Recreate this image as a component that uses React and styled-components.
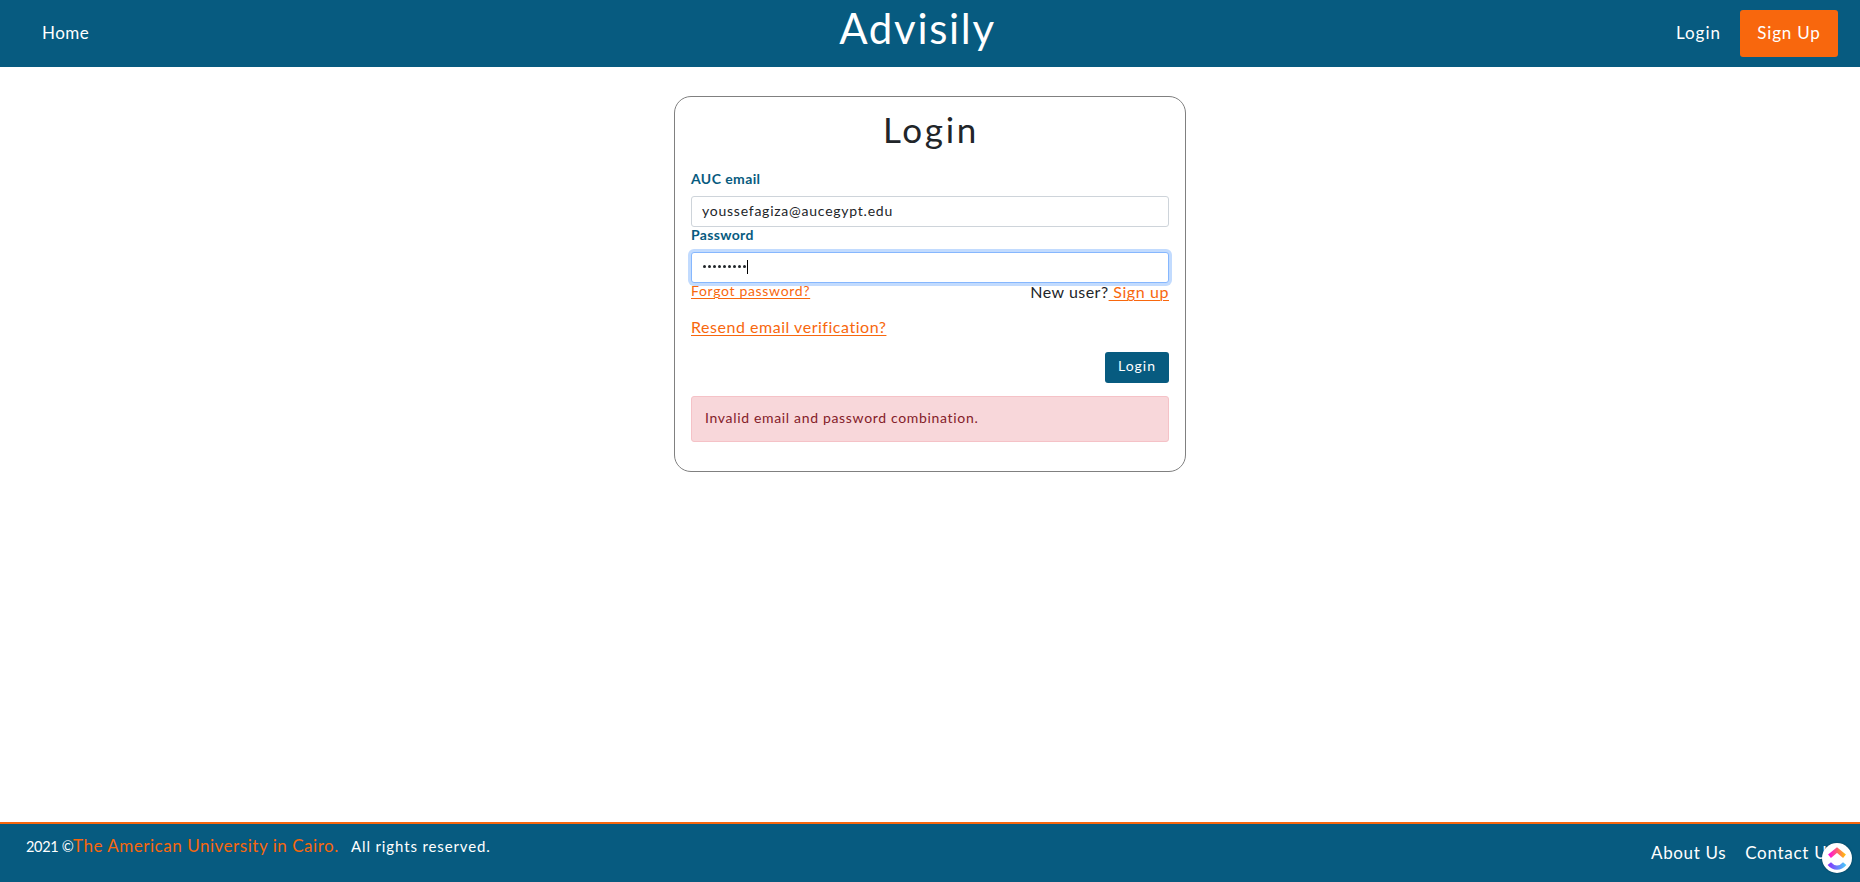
import React from "react";
import styled, { createGlobalStyle, css } from "styled-components";

const BLUE = "#075b80";
const ORANGE = "#f8670d";

const GlobalStyle = createGlobalStyle`
  *, *::before, *::after { box-sizing: border-box; }
  body {
    margin: 0;
    background: #fff;
    color: #212529;
    font-family: Lato, "Liberation Sans", sans-serif;
  }
`;

const type = css`
  font-size: ${(p) => p.$size}px;
  letter-spacing: ${(p) => p.$track || 0}px;
  white-space: nowrap;
`;

const Page = styled.div`
  display: flex;
  flex-direction: column;
  height: 882px;
  overflow: hidden;
`;

const Header = styled.header`
  display: flex;
  justify-content: space-between;
  height: 67px;
  padding: 10px 22px 10px 42px;
  background: ${BLUE};
`;

const NavGroup = styled.nav`
  display: flex;
  align-items: flex-start;
  height: 47px;
  gap: 19px;
  width: 300px;
  justify-content: ${(p) => (p.$end ? "flex-end" : "flex-start")};
`;

const NavLink = styled.a`
  ${type}
  color: #fff;
  line-height: 45px;
`;

const SignUpButton = styled(NavLink)`
  width: 98px;
  height: 47px;
  border-radius: 3px;
  background: ${ORANGE};
  text-align: center;
`;

const Brand = styled.h1`
  ${type}
  margin: -8px 0 0;
  padding-right: 45px;
  color: #fff;
  font-weight: 400;
  line-height: 52px;
`;

const Main = styled.main`
  flex: 1;
  padding-top: 29px;
`;

const Card = styled.form`
  display: flex;
  flex-direction: column;
  width: 512px;
  height: 376px;
  margin: 0 auto;
  padding: 15px 16px;
  border: 1px solid #808080;
  border-radius: 17px;
`;

const CardTitle = styled.h2`
  ${type}
  margin: -3px 0 17px;
  padding-left: 2px;
  font-weight: 400;
  line-height: 40px;
  text-align: center;
`;

const Label = styled.label`
  ${type}
  flex: none;
  height: ${(p) => p.$height}px;
  padding-top: ${(p) => p.$drop || 0}px;
  color: ${BLUE};
  font-weight: 700;
  line-height: ${(p) => p.$line || 17}px;
`;

const Field = styled.div`
  ${type}
  display: flex;
  flex: none;
  align-items: center;
  height: 31px;
  padding: 0 10px 3px;
  border: 1px solid ${(p) => (p.$focused ? "#86b7fe" : "#ced4da")};
  border-radius: 3px;
  background: #fff;
  box-shadow: ${(p) => (p.$focused ? "0 0 0 3px #c2dbfe" : "none")};
`;

const Dots = styled.div`
  display: flex;
  gap: 1.5px;
  padding: 1px 0 0 0.5px;
`;

const Dot = styled.i`
  width: 3.5px;
  height: 3.5px;
  border-radius: 50%;
  background: #212529;
`;

const Caret = styled.i`
  width: 1px;
  height: 14px;
  margin: 2px 0 0 1px;
  background: #000;
`;

const LinkRow = styled.div`
  display: flex;
  flex: none;
  justify-content: space-between;
  height: 35px;
`;

const Prompt = styled.span`
  ${type}
  line-height: 18px;
`;

const TextLink = styled.a`
  ${type}
  align-self: flex-start;
  color: ${ORANGE};
  line-height: ${(p) => p.$line || 18}px;
  text-decoration: underline;
  text-decoration-thickness: 1px;
  text-underline-offset: 2px;
`;

const SubmitButton = styled.button`
  ${type}
  align-self: flex-end;
  flex: none;
  width: 64px;
  height: 31px;
  margin: 16px 0 13px;
  padding: 0 0 4px;
  border: 0;
  border-radius: 3px;
  background: ${BLUE};
  color: #fff;
  font-family: inherit;
`;

const Alert = styled.div`
  ${type}
  flex: none;
  height: 46px;
  padding: 0 13px;
  border: 1px solid #f5c2c7;
  border-radius: 3px;
  background: #f8d7da;
  color: #842029;
  line-height: 41px;
`;

const Footer = styled.footer`
  display: flex;
  justify-content: space-between;
  height: 60px;
  padding: 12px 25px 0 26px;
  border-top: 2px solid ${ORANGE};
  background: ${BLUE};
  color: #fff;
`;

const Copyright = styled.div`
  display: flex;
  align-items: baseline;
  height: 24px;
`;

const FooterText = styled.span`
  ${type}
  width: ${(p) => p.$width}px;
  color: ${(p) => (p.$accent ? ORANGE : "#fff")};
  line-height: 19px;
`;

const FooterLinks = styled.nav`
  display: flex;
  gap: 19px;
  padding-top: 5px;
`;

const FooterLink = styled.a`
  ${type}
  line-height: 23px;
`;

const Launcher = styled.div`
  position: fixed;
  right: 8px;
  bottom: 9px;
  display: flex;
  width: 30px;
  height: 30px;
  border-radius: 50%;
  background: #fff;
  box-shadow: 0 0 2px rgba(0, 0, 0, 0.4);
`;

function LauncherMark() {
  return (
    <svg width="30" height="30" viewBox="0 0 30 30" fill="none">
      <defs>
        <linearGradient id="roof" x1="6" y1="0" x2="24" y2="0" gradientUnits="userSpaceOnUse">
          <stop stopColor="#ff02f0" />
          <stop offset=".5" stopColor="#ff5f72" />
          <stop offset="1" stopColor="#ffc800" />
        </linearGradient>
        <linearGradient id="smile" x1="6" y1="0" x2="24" y2="0" gradientUnits="userSpaceOnUse">
          <stop stopColor="#8930fd" />
          <stop offset="1" stopColor="#49ccf9" />
        </linearGradient>
      </defs>
      <path d="M7.5 13.3 15 7l7.5 6.3" stroke="url(#roof)" strokeWidth="4.4" />
      <path d="M7.3 20.6c4.4 5.3 11 5.3 15.4 0" stroke="url(#smile)" strokeWidth="4.4" />
    </svg>
  );
}

export default function App() {
  return (
    <>
      <GlobalStyle />
      <Page>
        <Header>
          <NavGroup>
            <NavLink $size={17} $track={0.5}>Home</NavLink>
          </NavGroup>
          <Brand $size={42} $track={1.7}>Advisily</Brand>
          <NavGroup $end>
            <NavLink $size={17} $track={1}>Login</NavLink>
            <SignUpButton $size={17} $track={0.8}>Sign Up</SignUpButton>
          </NavGroup>
        </Header>
        <Main>
          <Card>
            <CardTitle $size={35} $track={2.7}>Login</CardTitle>
            <Label $size={14} $track={0.4} $drop={4} $height={30}>AUC email</Label>
            <Field $size={14} $track={0.76}>youssefagiza@aucegypt.edu</Field>
            <Label $size={14} $track={0.35} $height={25} $line={16}>Password</Label>
            <Field $focused>
              <Dots>
                {Array.from({ length: 9 }, (_, i) => <Dot key={i} />)}
              </Dots>
              <Caret />
            </Field>
            <LinkRow>
              <TextLink $size={14} $track={0.67} $line={16}>Forgot password?</TextLink>
              <Prompt $size={16} $track={0.48}>
                New user?<TextLink $size={16} $track={0.58}> Sign up</TextLink>
              </Prompt>
            </LinkRow>
            <TextLink $size={16} $track={0.53}>Resend email verification?</TextLink>
            <SubmitButton type="button" $size={14} $track={1}>Login</SubmitButton>
            <Alert $size={14} $track={0.67}>Invalid email and password combination.</Alert>
          </Card>
        </Main>
        <Footer>
          <Copyright>
            <FooterText $size={14.5} $track={-0.3} $width={47}>2021 ©</FooterText>
            <FooterText $accent $size={17} $track={0.53} $width={278}>The American University in Cairo.</FooterText>
            <FooterText $size={15} $track={0.87} $width={150}>All rights reserved.</FooterText>
          </Copyright>
          <FooterLinks>
            <FooterLink $size={17} $track={0.65}>About Us</FooterLink>
            <FooterLink $size={17} $track={0.7}>Contact Us</FooterLink>
          </FooterLinks>
        </Footer>
        <Launcher>
          <LauncherMark />
        </Launcher>
      </Page>
    </>
  );
}
